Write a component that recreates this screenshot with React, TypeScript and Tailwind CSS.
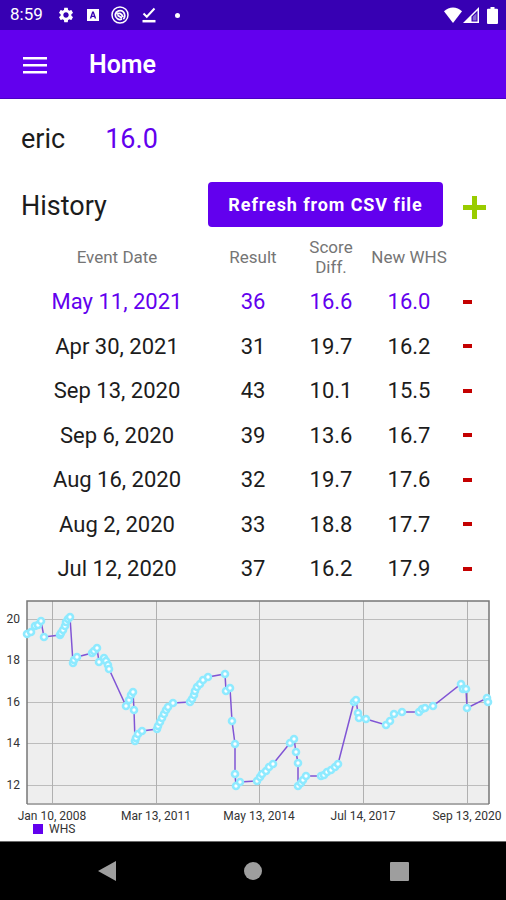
import { MdSettings } from "react-icons/md";

type Round = {
  date: string;
  result: number;
  diff: string;
  whs: string;
};

const rounds: Round[] = [
  { date: "May 11, 2021", result: 36, diff: "16.6", whs: "16.0" },
  { date: "Apr 30, 2021", result: 31, diff: "19.7", whs: "16.2" },
  { date: "Sep 13, 2020", result: 43, diff: "10.1", whs: "15.5" },
  { date: "Sep 6, 2020", result: 39, diff: "13.6", whs: "16.7" },
  { date: "Aug 16, 2020", result: 32, diff: "19.7", whs: "17.6" },
  { date: "Aug 2, 2020", result: 33, diff: "18.8", whs: "17.7" },
  { date: "Jul 12, 2020", result: 37, diff: "16.2", whs: "17.9" },
];

// WHS history, in chart units
const points: [number, number][] = [
  [27, 38], [31, 36], [35, 30], [38, 29], [41, 25], [44, 41], [60, 39], [61, 37], [63, 34],
  [65, 30], [66, 26], [68, 23], [70, 21], [73, 67], [74, 64], [77, 61], [92, 57], [94, 55],
  [97, 52], [99, 66], [104, 62], [106, 65], [108, 69], [109, 73], [126, 110], [129, 104],
  [131, 99], [133, 96], [134, 114], [135, 145], [136, 142], [138, 138], [142, 135],
  [157, 133], [158, 130], [160, 126], [162, 122], [164, 118], [166, 114], [168, 111],
  [173, 107], [190, 106], [192, 103], [194, 99], [195, 95], [197, 91], [200, 88], [203, 84],
  [208, 81], [225, 78], [226, 95], [230, 92], [232, 125], [235, 148], [235, 178], [236, 190],
  [240, 186], [257, 185], [260, 181], [262, 178], [266, 175], [269, 171], [273, 168],
  [290, 147], [294, 143], [296, 156], [298, 167], [298, 190], [301, 187], [303, 184],
  [306, 180], [321, 180], [324, 179], [327, 176], [331, 174], [335, 171], [338, 168],
  [354, 106], [356, 104], [358, 117], [359, 122], [366, 123], [386, 129], [390, 125],
  [394, 118], [402, 116], [419, 116], [422, 113], [425, 112], [433, 110], [461, 88],
  [463, 93], [466, 93], [467, 112], [487, 102], [488, 106],
];

const yTicks = [
  { label: "20", y: 23 },
  { label: "18", y: 64 },
  { label: "16", y: 106 },
  { label: "14", y: 147 },
  { label: "12", y: 189 },
];

const xTicks = [
  { label: "Jan 10, 2008", x: 52 },
  { label: "Mar 13, 2011", x: 156 },
  { label: "May 13, 2014", x: 259 },
  { label: "Jul 14, 2017", x: 363 },
  { label: "Sep 13, 2020", x: 467 },
];

function StatusBar() {
  return (
    <div className="flex h-[30px] items-center justify-between bg-[#3700b3] pr-2 pl-2.5 text-white">
      <div className="flex items-center">
        <span className="w-[47px] text-[17px]">8:59</span>
        <MdSettings className="size-[18px]" />
        <svg className="ml-3 size-3" viewBox="0 0 12 12">
          <path
            fill="currentColor"
            fillRule="evenodd"
            d="M0 0h12v12H0zM5.200 2.500 2.800 9.500h1.500l.5-1.500h2.400l.5 1.500h1.500L6.800 2.500zM6 4.200l.8 2.600H5.200z"
          />
        </svg>
        <svg className="ml-3 size-[18px]" viewBox="0 0 18 18" fill="none" stroke="currentColor">
          <circle cx="9" cy="9" r="8" strokeWidth="1.500" />
          <path
            strokeWidth="1.800"
            d="M4.200 8.500C5 5 9.500 3.300 12.300 5.800 14.500 8 14 11.500 12.300 13.200M4.200 8.500C4.200 12.500 8 14.500 11 13M6 8.500C8 6.300 10.800 7.500 11.800 11M6.500 9.300l4.500 2.700"
          />
        </svg>
        <svg className="ml-3 size-4" viewBox="0 0 16 16" fill="none" stroke="currentColor">
          <path strokeWidth="2" d="M2.500 6.500 5.800 9.800 13.500 1.500" />
          <path strokeWidth="2.500" d="M1.500 14.200h13" />
        </svg>
        <span className="ml-[18px] size-[5px] rounded-full bg-white" />
      </div>
      <div className="flex items-center">
        <svg className="h-4 w-[18px]" viewBox="0 0 18 16" fill="currentColor">
          <path d="M0 4.300C5-.9 13-.9 18 4.300L9 16z" />
        </svg>
        <svg className="ml-px size-4" viewBox="0 0 16 16" fill="currentColor">
          <path fillRule="evenodd" d="M16 0v16H0zM14.500 3.600 8.500 9.600V14.500h6z" />
          <path d="M9.700 9.800l3.800-3.600v7.300H9.700z" opacity=".4" />
        </svg>
        <svg className="ml-2 h-[17px] w-[11px]" viewBox="0 0 11 17" fill="currentColor">
          <path d="M3.500 0h4v1.700H10q1 0 1 1V16q0 1-1 1H1q-1 0-1-1V2.700q0-1 1-1h2.500z" />
        </svg>
      </div>
    </div>
  );
}

function AppBar() {
  return (
    <header className="flex h-[69px] items-center border-b border-[#4b00c4] bg-[#6200ee] pt-0.5 text-white">
      <button type="button" aria-label="Open menu" className="ml-[23px] flex h-9 w-6 items-center">
        <svg className="h-[17px] w-6" viewBox="0 0 24 17" fill="currentColor">
          <path d="M0 0h24v2.600H0zM0 7h24v2.600H0zM0 14h24v2.600H0z" />
        </svg>
      </button>
      <h1 className="ml-[42px] text-[25px] font-semibold">Home</h1>
    </header>
  );
}

function HistoryTable() {
  return (
    <table className="w-full table-fixed text-center text-[22px] leading-6">
      <colgroup>
        <col />
        <col className="w-[78px]" />
        <col className="w-[78px]" />
        <col className="w-[78px]" />
        <col className="w-[38px]" />
      </colgroup>
      <thead className="text-[17px] leading-5 text-[#757575]">
        <tr className="h-11">
          <th className="p-0 font-normal">Event Date</th>
          <th className="p-0 font-normal">Result</th>
          <th className="p-0 font-normal">Score Diff.</th>
          <th className="p-0 font-normal whitespace-nowrap">New WHS</th>
          <td />
        </tr>
      </thead>
      <tbody>
        {rounds.map((round, i) => (
          <tr
            key={round.date}
            className={`h-[45px] even:h-11 ${i === 0 ? "text-[#6200ee]" : "text-[#1c1c1c]"}`}
          >
            <td className="p-0 pt-px">{round.date}</td>
            <td className="p-0 pt-px">{round.result}</td>
            <td className="p-0 pt-px">{round.diff}</td>
            <td className="p-0 pt-px">{round.whs}</td>
            <td className="p-0">
              <button
                type="button"
                aria-label={`Delete ${round.date}`}
                className="flex h-8 w-full items-center justify-center"
              >
                <span className="h-1 w-[9px] bg-[#c40000]" />
              </button>
            </td>
          </tr>
        ))}
      </tbody>
    </table>
  );
}

function WhsChart() {
  return (
    <svg
      className="block w-full"
      viewBox="0 0 506 245"
      role="img"
      aria-label="WHS over time"
      fontFamily="Roboto, sans-serif"
      fontSize="12"
      fill="#333333"
    >
      <rect x="27" y="5" width="462" height="203" fill="#eeeeee" />
      {yTicks.map((tick) => (
        <g key={tick.label}>
          <path d={`M27 ${tick.y}.500H489`} stroke="#bcbcbc" />
          <text x="20" y={tick.y + 4} textAnchor="end">
            {tick.label}
          </text>
        </g>
      ))}
      {xTicks.map((tick) => (
        <g key={tick.label}>
          <path d={`M${tick.x}.500 5V208`} stroke="#b0b0b0" />
          <text x={tick.x} y="224" textAnchor="middle">
            {tick.label}
          </text>
        </g>
      ))}
      <path d="M27 208H489" stroke="#aaaaaa" strokeWidth="2" />
      <path d="M27 208V5H489V208" fill="none" stroke="#777777" strokeWidth="1.500" />
      <polyline
        points={points.map((p) => p.join(",")).join(" ")}
        fill="none"
        stroke="#8055d5"
        strokeWidth="1.500"
      />
      {points.map(([x, y]) => (
        <circle key={`${x}-${y}`} cx={x} cy={y} r="3" fill="#ffffff" stroke="#8eeaff" strokeWidth="2.600" />
      ))}
      <rect x="33" y="228" width="10" height="10" fill="#6200ee" />
      <text x="49" y="237">
        WHS
      </text>
    </svg>
  );
}

function NavBar() {
  return (
    <nav className="flex min-h-[59px] flex-1 items-center justify-center gap-[116px] border-t border-[#6b6b6b] bg-black text-[#9e9e9e]">
      <button type="button" aria-label="Back" className="flex w-[30px] justify-center">
        <svg className="h-5 w-[18px]" viewBox="0 0 18 20" fill="currentColor">
          <path d="M18 0v20L0 10z" />
        </svg>
      </button>
      <button type="button" aria-label="Home" className="flex w-[30px] justify-center">
        <span className="size-[18px] rounded-full bg-[#9e9e9e]" />
      </button>
      <button type="button" aria-label="Recent apps" className="flex w-[30px] justify-center">
        <span className="size-[19px] rounded-[1px] bg-[#9e9e9e]" />
      </button>
    </nav>
  );
}

export default function App() {
  return (
    <div className="flex min-h-screen flex-col bg-white font-[Roboto,sans-serif]">
      <StatusBar />
      <AppBar />
      <main className="pt-5">
        <div className="px-5">
          <div className="flex h-10 items-center gap-10 pl-px text-[27px] text-[#1c1c1c]">
            <span>eric</span>
            <span className="text-[#6200ee]">16.0</span>
          </div>
          <div className="mt-[23px] flex h-[45px] items-center">
            <h2 className="flex-1 pt-1 pl-px text-[27px] text-[#1c1c1c]">History</h2>
            <button
              type="button"
              className="h-full w-[235px] rounded bg-[#6200ee] text-lg font-bold tracking-wider text-white"
            >
              Refresh from CSV file
            </button>
            <button type="button" aria-label="Add round" className="ml-5 flex pt-1.5">
              <svg className="size-[23px]" viewBox="0 0 23 23" fill="#99cc00">
                <path d="M9 0h5v9h9v5h-9v9H9v-9H0V9h9z" />
              </svg>
            </button>
          </div>
          <div className="pt-2">
            <HistoryTable />
          </div>
        </div>
        <div className="pt-[5px]">
          <WhsChart />
        </div>
      </main>
      <NavBar />
    </div>
  );
}
